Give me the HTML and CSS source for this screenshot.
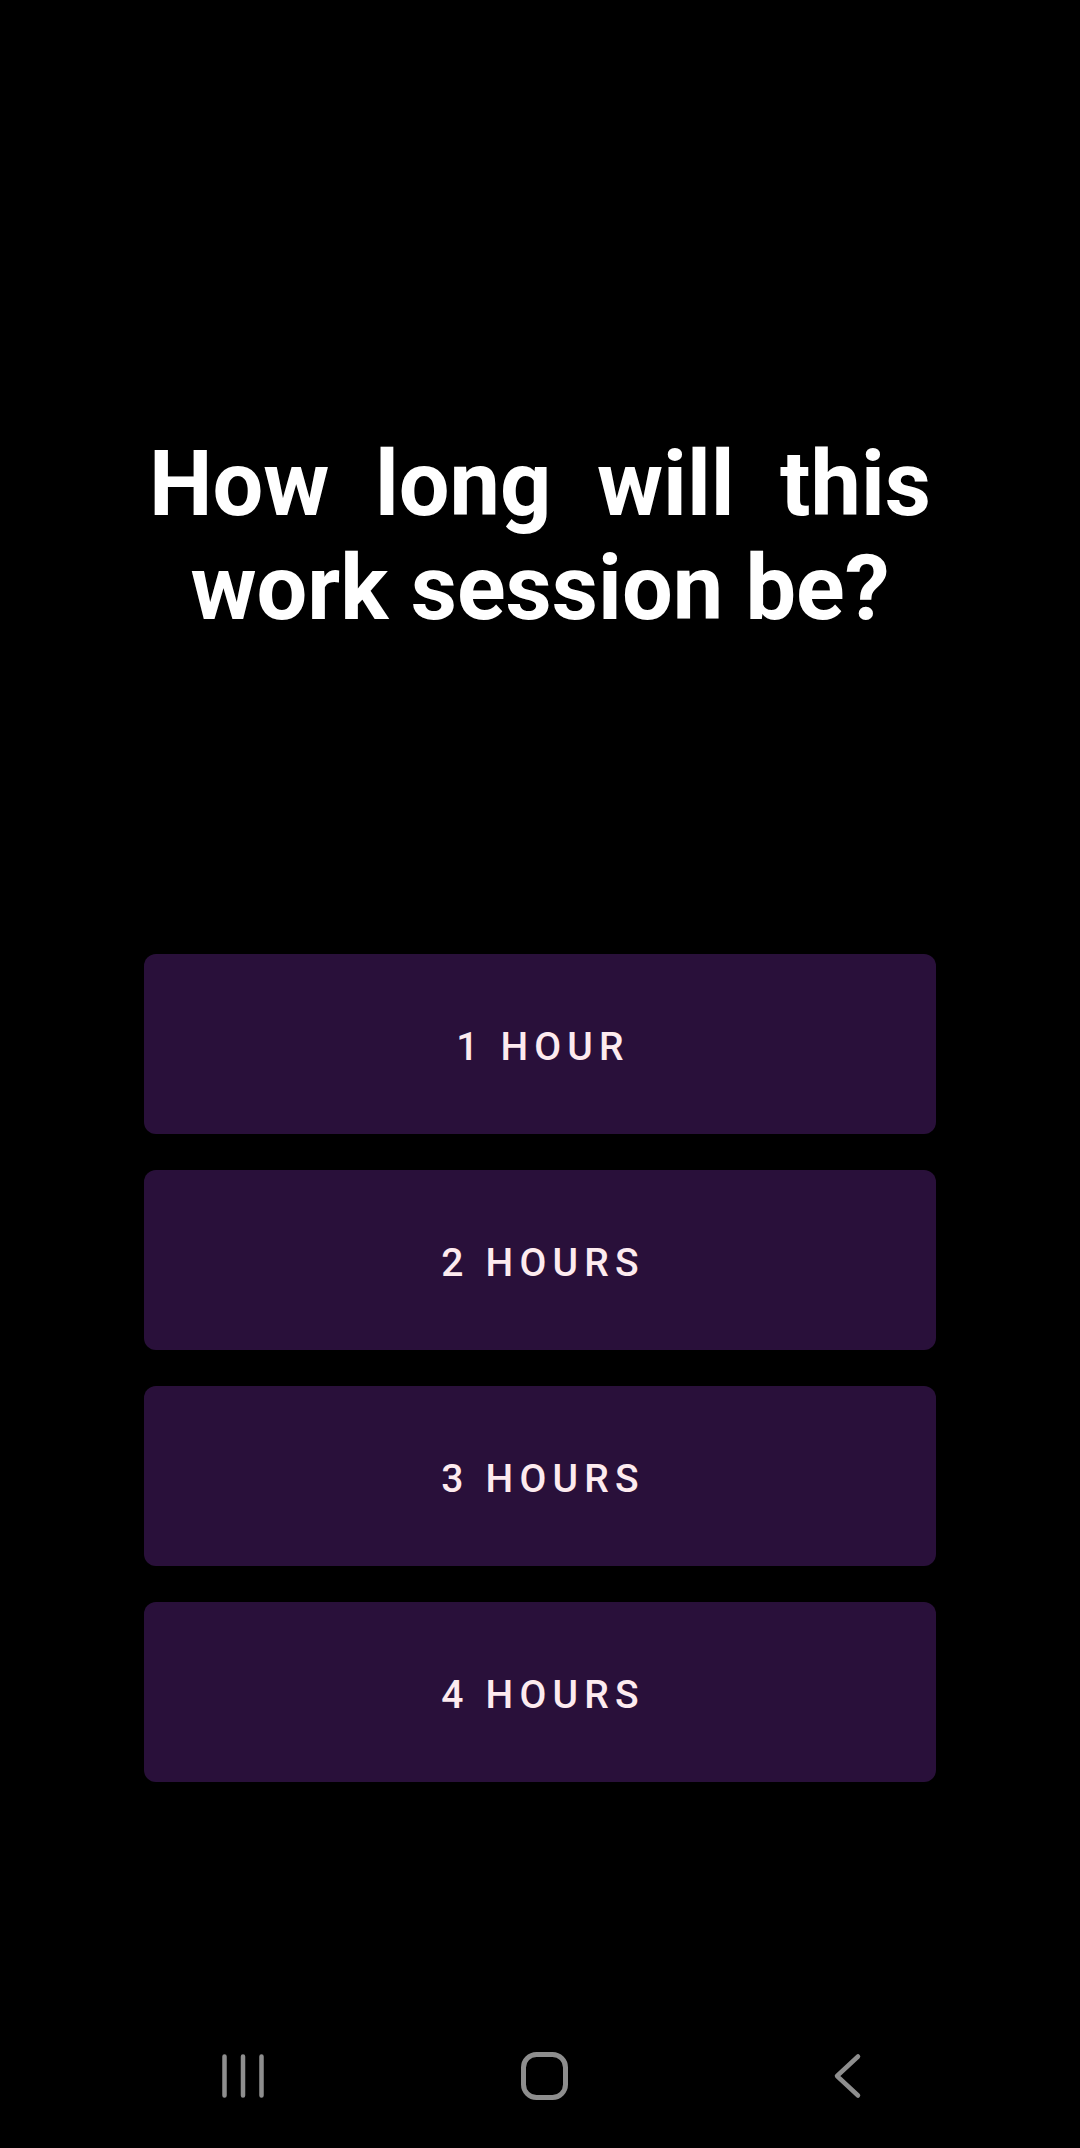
FILE: index.html
```html
<!DOCTYPE html>
<html lang="en">
<head>
<meta charset="utf-8">
<title>Work session</title>
<link rel="stylesheet" href="styles.css">
</head>
<body>
<div class="screen">
  <main class="content">
    <h1 class="title">How long will this work session be?</h1>
    <div class="options">
      <button class="option">1 HOUR</button>
      <button class="option">2 HOURS</button>
      <button class="option">3 HOURS</button>
      <button class="option">4 HOURS</button>
    </div>
  </main>
  <nav class="navbar">
    <div class="nav-slot">
      <svg class="nav-icon" width="48" height="48" viewBox="0 0 48 48">
        <path d="M5.5 4.5V43.5M24 4.5V43.5M42.5 4.5V43.5" stroke="#8e8e8e" stroke-width="4.5" stroke-linecap="round" fill="none"/>
      </svg>
    </div>
    <div class="nav-slot">
      <svg class="nav-icon" width="48" height="48" viewBox="0 0 48 48">
        <rect x="2.5" y="2.5" width="42" height="43" rx="13" stroke="#8e8e8e" stroke-width="5" fill="none"/>
      </svg>
    </div>
    <div class="nav-slot">
      <svg class="nav-icon" width="48" height="48" viewBox="0 0 48 48">
        <path d="M35 4.5L14 24L35 43.5" stroke="#8e8e8e" stroke-width="4.5" stroke-linecap="round" stroke-linejoin="round" fill="none"/>
      </svg>
    </div>
  </nav>
</div>
</body>
</html>
```
FILE: styles.css
```css
html, body {
  margin: 0;
  padding: 0;
  background: #000;
}
.screen {
  width: 1080px;
  height: 2148px;
  display: flex;
  flex-direction: column;
  background: #000;
  font-family: Roboto, "Noto Sans", sans-serif;
}
.content {
  flex: 1;
  display: flex;
  flex-direction: column;
  align-items: center;
  padding-top: 433px;
}
.title {
  margin: 0;
  width: 782px;
  color: #ffffff;
  font-family: Roboto, sans-serif;
  font-weight: 700;
  font-size: 90px;
  line-height: 104px;
  text-align: justify;
  text-align-last: center;
}
.options {
  margin-top: 313px;
  width: 792px;
  display: flex;
  flex-direction: column;
  gap: 36px;
}
.option {
  height: 180px;
  border: none;
  border-radius: 12px;
  background: #29103a;
  color: #fdebef;
  font-family: Roboto, sans-serif;
  font-weight: 500;
  font-size: 39px;
  letter-spacing: 6.2px;
  padding: 5px 0 0 6px;
  display: flex;
  align-items: center;
  justify-content: center;
}
.navbar {
  height: 144px;
  display: flex;
  align-items: center;
  padding: 0 82px 0 92px;
}
.nav-slot {
  width: 302px;
  display: flex;
  justify-content: center;
  align-items: center;
}
.nav-icon {
  display: block;
}
```
